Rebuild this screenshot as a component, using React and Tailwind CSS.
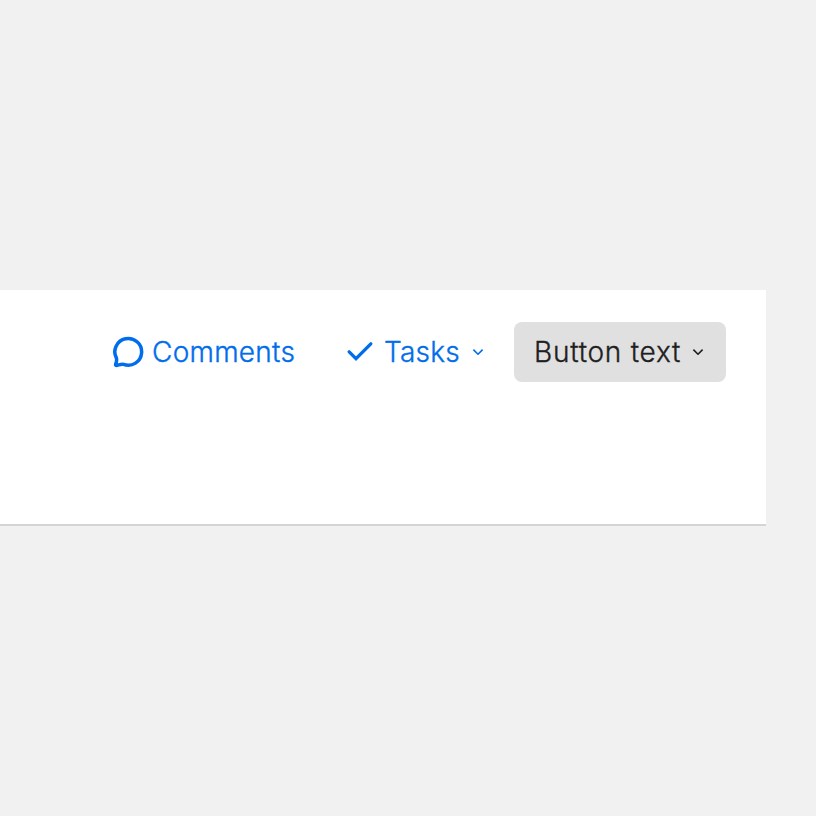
import React from "react";

function ChevronIcon() {
  return (
    <svg width="12" height="8" viewBox="0 0 12 8" fill="none" className="shrink-0">
      <path
        d="M1.4 1.6L6 6.2L10.6 1.6"
        stroke="currentColor"
        strokeWidth="1.6"
        strokeLinejoin="round"
      />
    </svg>
  );
}

function CheckIcon() {
  return (
    <svg width="26" height="20" viewBox="0 0 26 20" fill="none" className="shrink-0">
      <path
        d="M2.2 9.8L9 16.6L23.8 1.8"
        stroke="currentColor"
        strokeWidth="3.3"
        strokeLinecap="round"
        strokeLinejoin="miter"
      />
    </svg>
  );
}

function CommentIcon() {
  return (
    <svg width="32" height="32" viewBox="0 0 32 32" fill="none" className="shrink-0">
      <path
        d="M3.4 22.1A13.4 13.4 0 1 1 10.6 28.4C8.1 27.7 5.5 29.2 3.3 29.4C2.5 29.4 2.5 28.9 2.7 28.3C3.2 26.3 4.2 24.3 3.4 22.1Z"
        stroke="currentColor"
        strokeWidth="3.5"
        strokeLinejoin="round"
      />
    </svg>
  );
}

function App() {
  return (
    <div className="h-screen overflow-hidden bg-[#f1f1f1] pt-[290px] font-['Inter',sans-serif] text-[28px] leading-10 font-light antialiased [-webkit-text-stroke:0.35px_currentColor]">
      <div className="flex h-[236px] w-[766px] items-start justify-end border-b-2 border-[#d4d4d4] bg-white pt-8 pr-10">
        <button className="mr-[52px] flex h-[60px] items-center gap-[7px] text-[#006deb]">
          <CommentIcon />
          <span className="w-[143px] text-left tracking-[0.25px] whitespace-nowrap">
            Comments
          </span>
        </button>
        <button className="mr-[30px] flex h-[60px] items-center text-[#006deb]">
          <CheckIcon />
          <span className="ml-[11px] w-[76px] text-left tracking-[0.2px] whitespace-nowrap">
            Tasks
          </span>
          <span className="ml-3">
            <ChevronIcon />
          </span>
        </button>
        <button className="flex h-[60px] w-[212px] items-center justify-between rounded-lg bg-[#e0e0e0] pr-[22px] pl-5 text-[#1f1f1f]">
          <span className="tracking-[0.75px] whitespace-nowrap">Button text</span>
          <ChevronIcon />
        </button>
      </div>
    </div>
  );
}

export default App;
